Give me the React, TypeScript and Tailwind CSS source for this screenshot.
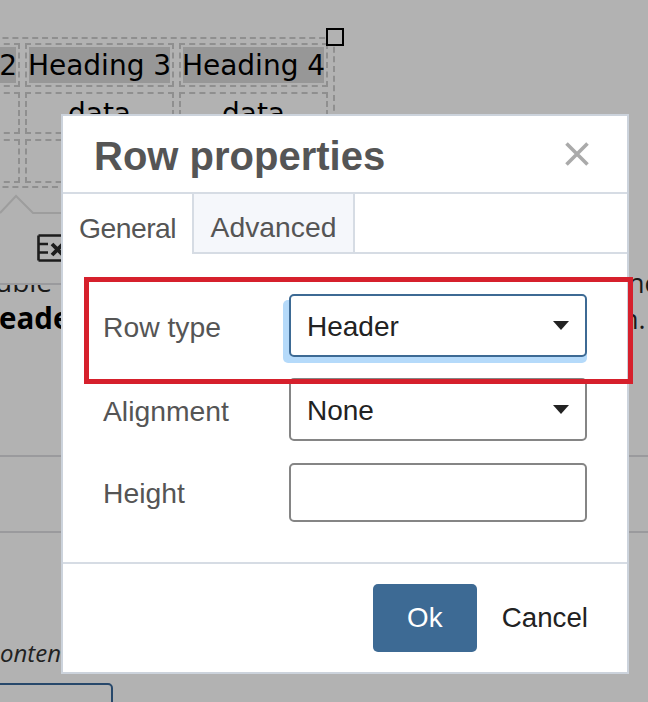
const sans = 'font-["Liberation_Sans",Arial,sans-serif]';

function Cell({ children, head }: { children?: string; head?: boolean }) {
  return (
    <div className="border-2 border-dashed border-[#8f8f8f] p-[2px] h-full min-w-0">
      <div
        className={`h-full flex items-center justify-center whitespace-nowrap text-[28px] text-black pt-[2px] ${head ? 'bg-[#979797]' : ''}`}
      >
        {children}
      </div>
    </div>
  );
}

function SelectBox({ value, focused }: { value: string; focused?: boolean }) {
  return (
    <div
      className={`w-[298px] h-[63px] rounded-[5px] border-2 bg-white pl-[16px] pr-[16px] flex items-center justify-between text-[28px] ${
        focused ? 'border-[#3d6a94] shadow-[-6px_6px_0_0_#b5dafa,0_6px_0_0_#b5dafa]' : 'border-[#858585]'
      }`}
    >
      <span className="text-[#222222] pt-[2px]">{value}</span>
      <svg width="16" height="9" viewBox="0 0 16 9">
        <path d="M0 0h16L8 9z" fill="#222222" />
      </svg>
    </div>
  );
}

export default function App() {
  return (
    <div className="relative w-[648px] h-[702px] overflow-hidden bg-[#b2b2b2] font-['DejaVu_Sans',sans-serif]">
      {/* page behind the dialog */}
      <div className="ml-[-136px] pt-[37px] w-[471px]">
        <div className="relative border-2 border-dashed border-[#8f8f8f] pt-[4px] px-[5px] pb-[3px]">
          <div className="grid grid-cols-[149px_149px_149px] gap-x-[5px] gap-y-[5px] grid-rows-[44px_42px_44px]">
            <Cell head>Heading 2</Cell>
            <Cell head>Heading 3</Cell>
            <Cell head>Heading 4</Cell>
            <Cell>data</Cell>
            <Cell>data</Cell>
            <Cell>data</Cell>
            <Cell />
            <Cell />
            <Cell />
          </div>
          <div className="absolute right-[-11px] top-[-11px] w-[18px] h-[18px] border-[2px] border-black bg-[#b2b2b2]" />
        </div>
      </div>

      <div className="h-[26px] w-[61px]">
        <svg width="61" height="26" viewBox="0 0 61 26" className="block">
          <path d="M0 25 L16 8 L33 25 H61" fill="none" stroke="#9d9d9d" strokeWidth="2" />
        </svg>
      </div>
      <div className="ml-[37px] mt-[20px] h-[28px] w-[24px] overflow-hidden">
        <svg width="30" height="28" viewBox="0 0 30 28" className="block">
          <path d="M1.5 1.5H24M1.5 1.5V26.5M1.5 26.5H24M1.5 10H11M1.5 18.5H11" fill="none" stroke="#1c1c1c" strokeWidth="2.6" />
          <path d="M15 10l11 11M26 10l-11 11" fill="none" stroke="#1c1c1c" strokeWidth="3.8" />
        </svg>
      </div>

      <div className="absolute left-0 top-[283px] w-[61px] h-[2px] bg-[#9a9a9d]" />
      <div className="absolute left-[-5px] top-[285px] h-[9px] overflow-hidden text-[28px] leading-[30px] text-[#1a1a1a] font-['Open_Sans',sans-serif]">
        <p className="mt-[-19px]">uble</p>
      </div>
      <div className="absolute left-[-1px] top-[301px] text-[29.5px] leading-[34px] font-bold text-black font-['Open_Sans',sans-serif]">eader</div>
      <div className="absolute left-[628px] top-[268px] text-[27px] leading-[30px] text-[#1a1a1a] font-['Open_Sans',sans-serif]">ne</div>
      <div className="absolute left-[622px] top-[304px] text-[27px] leading-[30px] text-[#1a1a1a] font-['Open_Sans',sans-serif]">n.</div>
      <div className="absolute left-0 right-0 top-[455px] h-[2px] bg-[#9a9a9d]" />
      <div className="absolute left-0 right-0 top-[531px] h-[2px] bg-[#9a9a9d]" />
      <div className="absolute left-0 top-[638px] text-[24px] leading-[30px] italic text-[#222222] font-['Open_Sans',sans-serif]">onten</div>
      <div className="absolute left-[-10px] top-[683px] w-[123px] h-[40px] rounded-[5px] border-2 border-[#27486b]" />

      {/* dialog */}
      <div className={`absolute left-[61px] top-[114px] w-[568px] h-[560px] bg-white border-2 border-[#ccd3dc] flex flex-col ${sans}`}>
        <div className="h-[78px] shrink-0 pl-[31px] pr-[38px] flex items-center justify-between border-b-2 border-[#d6dce4]">
          <h1 className="text-[40px] font-bold text-[#555555] pt-[3px]">Row properties</h1>
          <svg width="24" height="24" viewBox="0 0 24 24">
            <path d="M1.5 1.5l21 21M22.5 1.5l-21 21" stroke="#aaaaaa" strokeWidth="3.6" fill="none" />
          </svg>
        </div>
        <div className="h-[60px] shrink-0 flex border-b-2 border-[#d6dce4] text-[28.3px] text-[#555555]">
          <div className="w-[129px] h-[60px] bg-white flex items-center justify-center pt-[8px] tracking-[-0.5px]">General</div>
          <div className="w-[163px] flex items-center justify-center bg-[#f5f7fb] border-x-2 border-[#d6dce4] pt-[8px]">Advanced</div>
        </div>
        <div className="flex-1 pl-[40px] pr-[40px] pt-[40px] flex flex-col text-[28.3px] text-[#555555]">
          <div className="flex items-center justify-between h-[63px]">
            <span className="pt-[3px]">Row type</span>
            <SelectBox value="Header" focused />
          </div>
          <div className="flex items-center justify-between h-[63px] mt-[21px]">
            <span className="pt-[3px]">Alignment</span>
            <SelectBox value="None" />
          </div>
          <div className="flex items-center justify-between h-[59px] mt-[22px]">
            <span className="pt-[1px]">Height</span>
            <div className="w-[298px] h-[59px] rounded-[5px] border-2 border-[#858585] bg-white" />
          </div>
        </div>
        <div className="h-[110px] shrink-0 border-t-2 border-[#d6dce4] flex items-start justify-end pt-[20px] pr-[39px] gap-[25px] text-[27.7px]">
          <button className="w-[104px] h-[68px] rounded-[5px] bg-[#3d6a94] text-white">Ok</button>
          <span className="h-[68px] flex items-center text-[#222222]">Cancel</span>
        </div>
      </div>

      {/* annotation */}
      <div className="absolute left-[84px] top-[277px] w-[549px] h-[107px] border-[5px] border-[#d6202c]" />
    </div>
  );
}
